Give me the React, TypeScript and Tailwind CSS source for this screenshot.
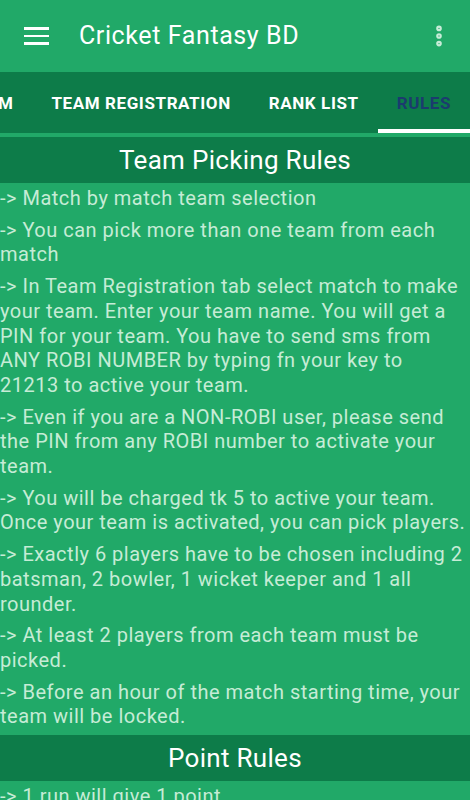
import { EllipsisVertical } from 'lucide-react'

const pickingRules = [
  '-> Match by match team selection',
  '-> You can pick more than one team from each match',
  '-> In Team Registration tab select match to make your team. Enter your team name. You will get a PIN for your team. You have to send sms from ANY ROBI NUMBER by typing fn your key to\n21213 to active your team.',
  '-> Even if you are a NON-ROBI user, please send the PIN from any ROBI number to activate your team.',
  '-> You will be charged tk 5 to active your team. Once your team is activated, you can pick players.',
  '-> Exactly 6 players have to be chosen including 2 batsman, 2 bowler, 1 wicket keeper and 1 all rounder.',
  '-> At least 2 players from each team must be picked.',
  '-> Before an hour of the match starting time, your team will be locked.',
]

const pointRules = ['-> 1 run will give 1 point', '-> 1 wicket will give 20 points']

const tabs = ['MY TEAM', 'TEAM REGISTRATION', 'RANK LIST', 'RULES']

function SectionHeader({ title }: { title: string }) {
  return (
    <div className="h-[46px] bg-[#0d7c49] flex items-center justify-center text-white text-[26px] tracking-[0.3px]">
      {title}
    </div>
  )
}

function RuleList({ items }: { items: string[] }) {
  return (
    <div className="flex flex-col gap-[7px] pt-[3px] pb-[6px]">
      {items.map((r) => (
        <p key={r} className="text-[20px] leading-[24.7px] tracking-[0.5px] whitespace-pre-line text-[#c6ecd6]">
          {r}
        </p>
      ))}
    </div>
  )
}

export default function App() {
  return (
    <div className="w-[470px] h-[800px] overflow-hidden bg-[#21a968] font-['Roboto',sans-serif]">
      <div className="h-[72px] flex items-center">
        <div className="w-[79px] pl-[24px] flex flex-col gap-[5px]">
          <span className="block w-[25px] h-[2.5px] bg-white" />
          <span className="block w-[25px] h-[2.5px] bg-white" />
          <span className="block w-[25px] h-[2.5px] bg-white" />
        </div>
        <div className="flex-1 text-white text-[25px] tracking-[0.6px] pb-[1px]">Cricket Fantasy BD</div>
        <EllipsisVertical className="mr-[18px] text-[#c8ecd8]" size={26} strokeWidth={3.2} />
      </div>
      <div className="h-[61px] bg-[#0d7c49] flex justify-end overflow-hidden">
        {tabs.map((t) => (
          <div
            key={t}
            className={`shrink-0 px-[19px] flex items-center relative text-[17px] tracking-[0.6px] font-bold ${
              t === 'RULES' ? 'text-[#1b3b6e]' : 'text-white'
            }`}
          >
            <span className="pt-[2px]">{t}</span>
            {t === 'RULES' && <span className="absolute left-0 right-0 bottom-0 h-[4px] bg-white" />}
          </div>
        ))}
      </div>
      <div className="h-[4px]" />
      <SectionHeader title="Team Picking Rules" />
      <RuleList items={pickingRules} />
      <SectionHeader title="Point Rules" />
      <RuleList items={pointRules} />
    </div>
  )
}
